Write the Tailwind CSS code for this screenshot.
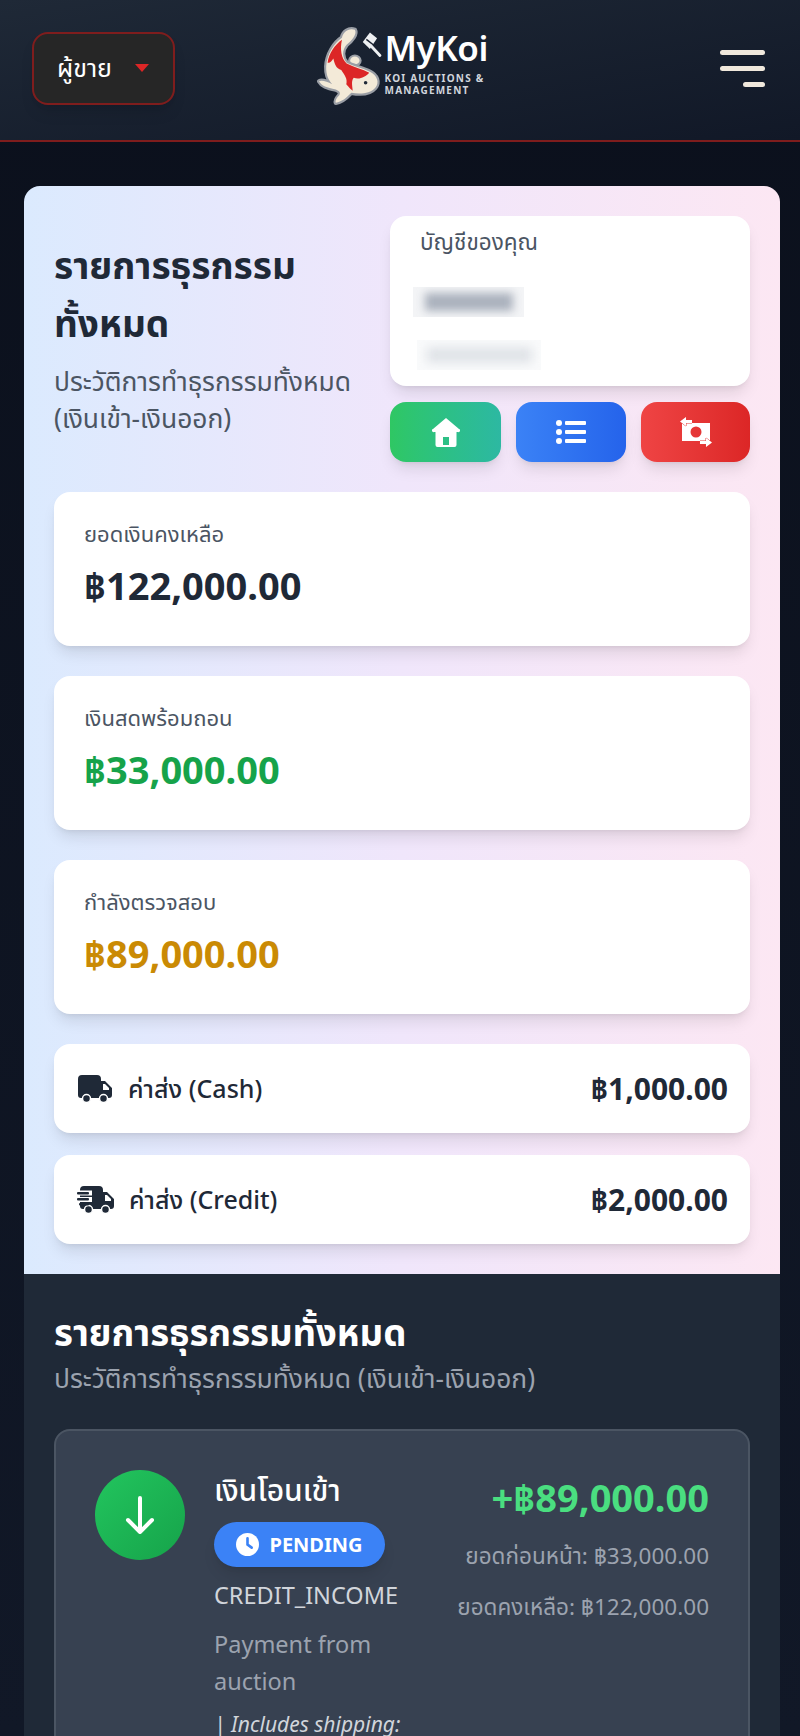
<!DOCTYPE html>
<html lang="th">

<head>
    <meta charset="UTF-8">
    <meta name="viewport" content="width=device-width, initial-scale=1.0">
    <title>MyKoi - รายการธุรกรรมทั้งหมด</title>
    <script src="https://cdn.jsdelivr.net/npm/@tailwindcss/browser@4"></script>
</head>

<body class="bg-[#111827] font-['Noto_Sans','Noto_Sans_Thai','Noto_Sans_CJK_SC',sans-serif]">
    <div class="w-[800px] h-[1736px] overflow-hidden bg-gradient-to-b from-[#0b101c] to-[#111827]">
        <!-- header -->
        <header class="h-[142px] flex items-center justify-between pl-8 pr-[35px] pb-1 bg-gradient-to-br from-[#1f2937] to-[#111827] border-b-2 border-[#7f1d1d]">
            <button class="w-[143px] h-[73px] flex items-center justify-between pl-[23px] pr-[24px] bg-[#262626] border-2 border-[#7f1d1d] rounded-2xl shadow-lg">
                <span class="text-[25px] text-white">ผู้ขาย</span>
                <span class="w-0 h-0 border-x-[7px] border-x-transparent border-t-[8px] border-t-[#dc2626]"></span>
            </button>
            <div class="flex items-center mr-[90px] mb-[8px]">
                <svg width="86" height="97" viewBox="0 0 240 270">
                    <g fill="#f3ead8" stroke="#9a9ea5" stroke-width="12" stroke-linejoin="round" paint-order="stroke">
                        <ellipse cx="128" cy="124" rx="13" ry="11"/>
                        <path d="M128 38C110 32 95 45 92 60C70 75 50 105 48 140C47 165 55 180 65 190C50 182 35 178 28 182C35 195 50 200 75 205C85 210 88 212 85 220C78 228 72 235 75 242C90 240 105 228 118 214C140 218 170 218 185 200C198 185 190 165 170 155C150 145 125 140 105 130C92 115 92 95 105 80C120 68 135 50 128 38Z"/>
                    </g>
                    <path d="M92 66C72 80 55 105 52 130C58 132 64 125 68 118C72 135 75 145 90 150C100 165 108 175 104 190C112 200 118 205 122 208C120 190 118 180 125 172C140 178 158 170 168 158C150 148 125 142 105 132C90 118 86 92 92 66Z" fill="#dc2626"/>
                    <circle cx="158" cy="186" r="5" fill="#1f2937"/>
                    <path d="M150 72L170 46L190 62L170 92Z" fill="#eef0f2"/>
                    <path d="M160 65L182 82" stroke="#1a2230" stroke-width="4"/>
                    <path d="M174 84L198 110" stroke="#eef0f2" stroke-width="8" stroke-linecap="round"/>
                </svg>
                <div class="text-white -ml-[10px] -mt-[4px]">
                    <div class="text-[35px] leading-[40px] font-semibold tracking-[-0.5px]">MyKoi</div>
                    <div class="text-[10px] leading-[12px] font-bold tracking-[1.2px] text-gray-300 mt-[4px] w-[112px]">KOI AUCTIONS &amp; MANAGEMENT</div>
                </div>
            </div>
            <div class="w-[45px] flex flex-col items-end gap-[11px]">
                <span class="block w-full h-[5px] rounded-full bg-[#f0e8dc]"></span>
                <span class="block w-full h-[5px] rounded-full bg-[#f0e8dc]"></span>
                <span class="block w-[22px] h-[5px] rounded-full bg-[#f0e8dc]"></span>
            </div>
        </header>

        <main class="ml-6 mr-5 mt-[44px] rounded-t-2xl overflow-hidden">
            <!-- summary -->
            <section class="px-[30px] pt-[30px] pb-[30px] bg-gradient-to-r from-[#dbeafe] via-[#f0e6fb] to-[#fce7f3]">
                <div class="flex justify-between">
                    <div class="w-[325px] pt-[20px] text-[#1f2937]">
                        <h1 class="text-[37px] leading-[58px] font-bold">รายการธุรกรรมทั้งหมด</h1>
                        <p class="mt-[11px] text-[26.400px] leading-[37px] text-[#4b5563]">ประวัติการทำธุรกรรมทั้งหมด (เงินเข้า-เงินออก)</p>
                    </div>
                    <div class="w-[360px]">
                        <div class="h-[170px] bg-white rounded-2xl shadow-lg pl-[23px] pt-[11px]">
                            <p class="pl-[7px] text-[22.500px] leading-[30px] text-[#4b5563]">บัญชีของคุณ</p>
                            <div class="w-[111px] h-[30px] mt-[30px] overflow-hidden bg-gray-100 flex items-center justify-center">
                                <div class="w-[88px] h-[18px] bg-gray-400/80 blur-[4px]"></div>
                            </div>
                            <div class="w-[124px] h-[30px] mt-[23px] ml-[4px] overflow-hidden bg-gray-50 flex items-center justify-center">
                                <div class="w-[105px] h-[16px] bg-gray-300/60 blur-[5px]"></div>
                            </div>
                        </div>
                        <div class="mt-[16px] flex gap-[15px]">
                            <a class="w-[111px] h-[60px] flex items-center justify-center rounded-2xl bg-gradient-to-r from-[#2fc763] to-[#2db8a2] shadow-lg">
                                <svg width="28" height="29" viewBox="0 0 28 29" fill="#fff"><path fill-rule="evenodd" d="M14 0L27 11A1.500 1.500 0 0 1 26 14H24.500V27A2 2 0 0 1 22.500 29H5.500A2 2 0 0 1 3.500 27V14H2A1.500 1.500 0 0 1 1 11ZM11 19V27H17V19Z"/></svg>
                            </a>
                            <a class="w-[110px] h-[60px] flex items-center justify-center rounded-2xl bg-gradient-to-r from-[#3b82f6] to-[#2563eb] shadow-lg">
                                <svg width="30" height="26" viewBox="0 0 30 26" fill="#fff"><circle cx="3" cy="4" r="3"/><circle cx="3" cy="13" r="3"/><circle cx="3" cy="22" r="3"/><rect x="9" y="2" width="21" height="4" rx="1"/><rect x="9" y="11" width="21" height="4" rx="1"/><rect x="9" y="20" width="21" height="4" rx="1"/></svg>
                            </a>
                            <a class="w-[109px] h-[60px] flex items-center justify-center rounded-2xl bg-gradient-to-r from-[#ef4444] to-[#dc2626] shadow-lg">
                                <svg width="34" height="30" viewBox="0 0 34 30" fill="#fff"><path fill-rule="evenodd" d="M3 6H31V24H3ZM17 9.500A5.500 5.500 0 1 0 17 20.500A5.500 5.500 0 1 0 17 9.500Z"/><path d="M7 0V3H13V6H7V9L1 4.500ZM27 21V24H21V27H27V30L33 25.500Z" stroke="#e53e3e" stroke-width="1" paint-order="stroke"/></svg>
                            </a>
                        </div>
                    </div>
                </div>

                <div class="mt-[30px] flex flex-col gap-[30px]">
                    <div class="h-[154px] bg-white rounded-2xl shadow-lg px-[30px] pt-[26px]">
                        <p class="text-[22px] leading-[30px] text-[#4b5563]">ยอดเงินคงเหลือ</p>
                        <p class="mt-[12px] text-[38px] leading-[50px] font-bold text-[#1f2937]">฿122,000.00</p>
                    </div>
                    <div class="h-[154px] bg-white rounded-2xl shadow-lg px-[30px] pt-[26px]">
                        <p class="text-[22px] leading-[30px] text-[#4b5563]">เงินสดพร้อมถอน</p>
                        <p class="mt-[12px] text-[38px] leading-[50px] font-bold text-[#16a34a]">฿33,000.00</p>
                    </div>
                    <div class="h-[154px] bg-white rounded-2xl shadow-lg px-[30px] pt-[26px]">
                        <p class="text-[22px] leading-[30px] text-[#4b5563]">กำลังตรวจสอบ</p>
                        <p class="mt-[12px] text-[38px] leading-[50px] font-bold text-[#ca8a04]">฿89,000.00</p>
                    </div>
                </div>

                <div class="mt-[30px] flex flex-col gap-[22px] text-[#1f2937]">
                    <div class="h-[89px] flex items-center justify-between bg-white rounded-2xl shadow-lg pl-6 pr-[22px]">
                        <div class="flex items-center gap-[16px]">
                            <svg width="34" height="28" viewBox="0 0 34 28"><path d="M4 0H19A4 4 0 0 1 23 4V6H27L34 13V20A3 3 0 0 1 31 23H3A3 3 0 0 1 0 20V4A4 4 0 0 1 4 0Z" fill="#1f2937"/><path d="M25 9V15H31V13L27 9Z" fill="#fff"/><circle cx="8.500" cy="23.500" r="4" fill="#1f2937" stroke="#fff" stroke-width="1.500"/><circle cx="25.500" cy="23.500" r="4" fill="#1f2937" stroke="#fff" stroke-width="1.500"/></svg>
                            <span class="text-[25px] font-medium">ค่าส่ง (Cash)</span>
                        </div>
                        <span class="text-[30px] font-bold">฿1,000.00</span>
                    </div>
                    <div class="h-[89px] flex items-center justify-between bg-white rounded-2xl shadow-lg pl-[23px] pr-[22px]">
                        <div class="flex items-center gap-[15px]">
                            <svg width="37" height="28" viewBox="0 0 37 28"><path d="M7 0H22A4 4 0 0 1 26 4V6H30L37 13V20A3 3 0 0 1 34 23H6A3 3 0 0 1 3 20V4A4 4 0 0 1 7 0Z" fill="#1f2937"/><path d="M28 9V15H34V13L30 9Z" fill="#fff"/><circle cx="11.500" cy="23.500" r="4" fill="#1f2937" stroke="#fff" stroke-width="1.500"/><circle cx="28.500" cy="23.500" r="4" fill="#1f2937" stroke="#fff" stroke-width="1.500"/><g fill="#fff"><rect x="0" y="4.500" width="15" height="5"/><rect x="0" y="11" width="15" height="5"/></g><g fill="#1f2937"><rect x="0" y="6" width="12" height="2.500" rx="1"/><rect x="0" y="12" width="12" height="2.500" rx="1"/><rect x="2" y="17" width="10" height="2.500" rx="1"/></g></svg>
                            <span class="text-[25px] font-medium">ค่าส่ง (Credit)</span>
                        </div>
                        <span class="text-[30px] font-bold">฿2,000.00</span>
                    </div>
                </div>
            </section>

            <!-- transaction list -->
            <section class="px-[30px] pt-[33px] bg-[#1f2937]">
                <h2 class="text-[36.500px] leading-[50px] font-bold text-white">รายการธุรกรรมทั้งหมด</h2>
                <p class="mt-[1px] text-[26.400px] leading-[40px] text-[#9ca3af]">ประวัติการทำธุรกรรมทั้งหมด (เงินเข้า-เงินออก)</p>
                <div class="mt-[31px] flex gap-[29px] p-[39px] bg-[#374151] border-2 border-[#4b5563] rounded-2xl">
                    <div class="w-[90px] h-[90px] shrink-0 rounded-full flex items-center justify-center bg-gradient-to-br from-[#22c55e] to-[#16a34a]">
                        <svg width="30" height="38" viewBox="0 0 30 38" fill="none" stroke="#fff" stroke-width="4" stroke-linecap="round" stroke-linejoin="round"><path d="M15 2V36M3 24L15 36L27 24"/></svg>
                    </div>
                    <div class="w-[190px] shrink-0">
                        <p class="-mt-[2px] text-[30px] leading-[44px] font-medium text-white">เงินโอนเข้า</p>
                        <span class="mt-[10px] w-[171px] h-[45px] flex items-center justify-center gap-[10px] rounded-full bg-[#3b82f6] shadow-lg text-white text-[20px] font-bold">
                            <svg width="23" height="23" viewBox="0 0 22 22"><circle cx="11" cy="11" r="11" fill="#fff"/><path d="M11 5V11L15 14" fill="none" stroke="#3b82f6" stroke-width="2.500" stroke-linecap="round"/></svg>
                            PENDING
                        </span>
                        <p class="mt-[8px] text-[23.500px] leading-[40px] text-[#d1d5db]">CREDIT_INCOME</p>
                        <p class="mt-[11px] text-[23.500px] leading-[37px] text-[#9ca3af]">Payment from auction</p>
                        <p class="mt-[9px] text-[21px] leading-[30px] italic text-[#d1d5db]">| Includes shipping:</p>
                    </div>
                    <div class="flex-1 flex flex-col items-end whitespace-nowrap">
                        <p class="mt-[4px] text-[38px] leading-[46px] font-bold text-[#4ade80]">+฿89,000.00</p>
                        <p class="mt-[21px] text-[22.500px] leading-[30px] text-[#9ca3af]">ยอดก่อนหน้า: ฿33,000.00</p>
                        <p class="mt-[21px] text-[22.500px] leading-[30px] text-[#9ca3af]">ยอดคงเหลือ: ฿122,000.00</p>
                    </div>
                </div>
            </section>
        </main>
    </div>
</body>

</html>
